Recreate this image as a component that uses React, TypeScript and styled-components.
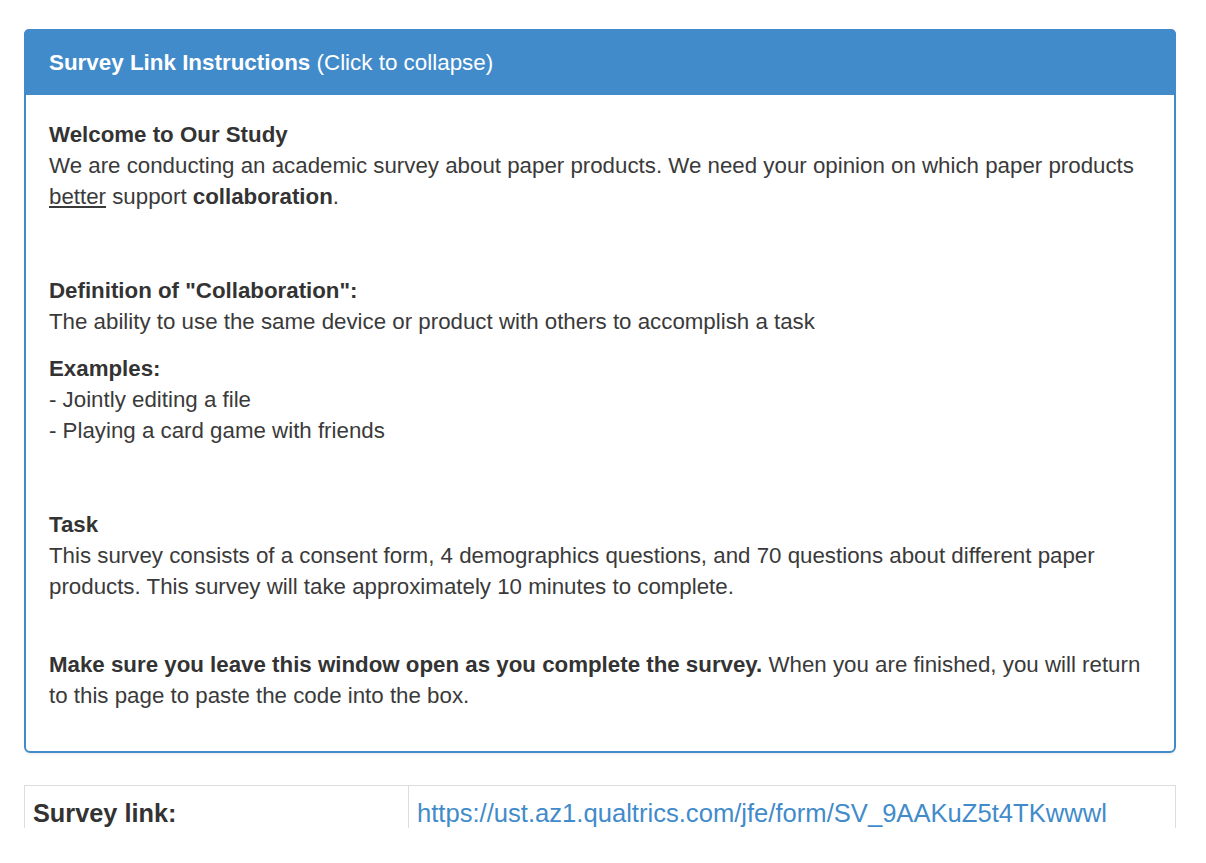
import React from "react";
import styled, { createGlobalStyle } from "styled-components";

const Global = createGlobalStyle`
  html, body {
    margin: 0;
    padding: 0;
    background: #fff;
  }
  body {
    font-family: "Liberation Sans", Arial, Helvetica, sans-serif;
    color: #3a3a3a;
  }
`;

const Page = styled.div`
  height: 828px;
  overflow: hidden;
  padding: 29px 0 0 24px;
  box-sizing: border-box;
`;

const Panel = styled.section`
  width: 1152px;
  border: 2px solid #428bca;
  border-radius: 6px;
  box-sizing: border-box;
  box-shadow: 0 2px 2px rgba(0, 0, 0, 0.05);
  margin-bottom: 32px;
`;

const Heading = styled.div`
  background: #428bca;
  color: #fff;
  padding: 17px 23px 15px 25px;
  margin: -2px -2px 0;
  font-size: 22.4px;
  line-height: 34px;
  border-radius: 5px 5px 0 0;
  cursor: pointer;
`;

const HeadingTitle = styled.strong`
  font-weight: bold;
`;

const Body = styled.div`
  padding: 24px 22px 24px 23px;
  font-size: 22.3px;
  line-height: 31px;
`;

const Para = styled.p<{ $gap?: number }>`
  margin: 0 0 ${(p) => p.$gap ?? 16}px;
`;

const Blank = styled.div<{ $h: number }>`
  height: ${(p) => p.$h}px;
`;

const Under = styled.u`
  text-decoration: underline;
`;

const Strong = styled.strong`
  color: #333;
`;

const LinkTable = styled.table`
  width: 1152px;
  border-collapse: collapse;
  table-layout: fixed;
`;

const Col = styled.col<{ $w?: number }>`
  width: ${(p) => (p.$w ? `${p.$w}px` : "auto")};
`;

const Cell = styled.td<{ $label?: boolean }>`
  border: 1px solid #ddd;
  padding: 9px 8px;
  vertical-align: top;
  font-size: ${(p) => (p.$label ? "25.3px" : "25.6px")};
  line-height: 36px;
  font-weight: ${(p) => (p.$label ? "bold" : "normal")};
  color: #333;
  white-space: nowrap;
`;

const Link = styled.a`
  color: #428bca;
  text-decoration: none;
`;

export default function App() {
  return (
    <>
      <Global />
      <Page>
        <Panel>
          <Heading>
            <HeadingTitle>Survey Link Instructions</HeadingTitle> (Click to collapse)
          </Heading>
          <Body>
            <Para>
              <Strong>Welcome to Our Study</Strong>
              <br />
              We are conducting an academic survey about paper products. We need your opinion on which paper
              products <Under>better</Under> support <Strong>collaboration</Strong>.
            </Para>
            <Blank $h={47} />
            <Para>
              <Strong>Definition of "Collaboration":</Strong>
              <br />
              The ability to use the same device or product with others to accomplish a task
            </Para>
            <Para>
              <Strong>Examples:</Strong>
              <br />- Jointly editing a file
              <br />- Playing a card game with friends
            </Para>
            <Blank $h={47} />
            <Para>
              <Strong>Task</Strong>
              <br />
              This survey consists of a consent form, 4 demographics questions, and 70 questions about different
              paper products. This survey will take approximately 10 minutes to complete.
            </Para>
            <Blank $h={31} />
            <Para>
              <Strong>Make sure you leave this window open as you complete the survey.</Strong> When you are
              finished, you will return to this page to paste the code into the box.
            </Para>
          </Body>
        </Panel>
        <LinkTable>
          <colgroup>
            <Col $w={384} />
            <Col />
          </colgroup>
          <tbody>
            <tr>
              <Cell $label>Survey link:</Cell>
              <Cell>
                <Link href="#">https://ust.az1.qualtrics.com/jfe/form/SV_9AAKuZ5t4TKwwwl</Link>
              </Cell>
            </tr>
          </tbody>
        </LinkTable>
      </Page>
    </>
  );
}
